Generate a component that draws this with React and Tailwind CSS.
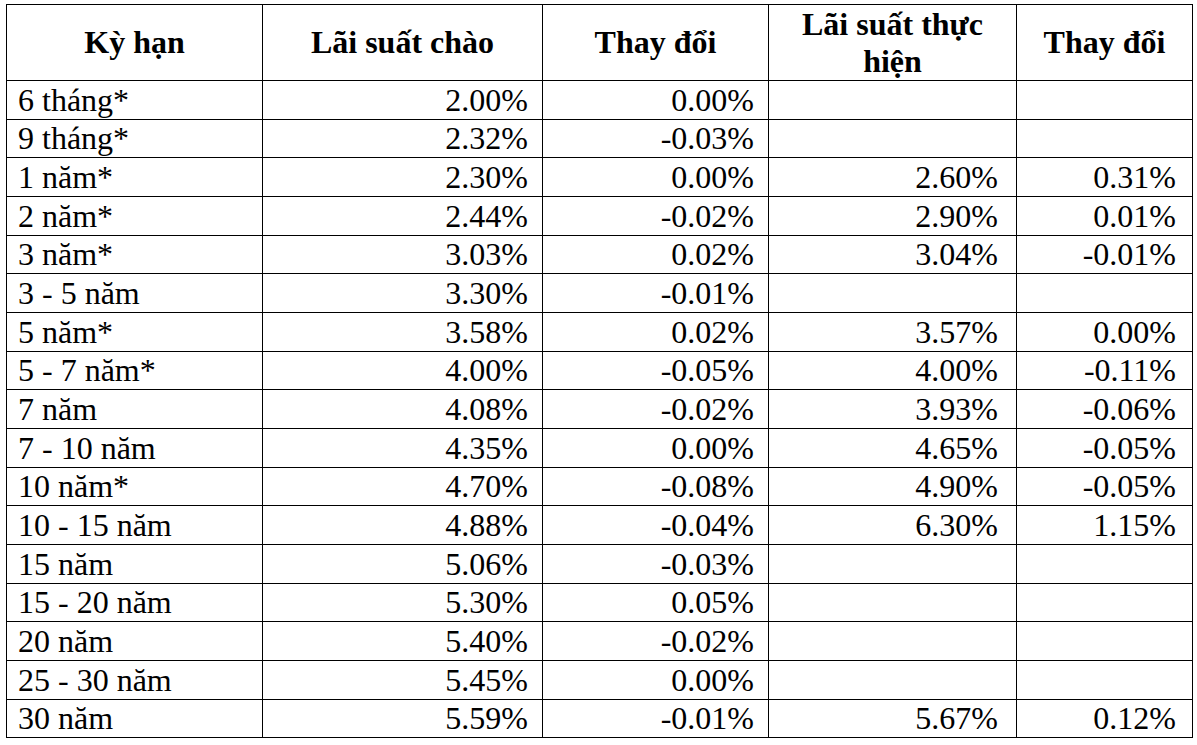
import React from "react";

const rows = [
  ["6 tháng*", "2.00%", "0.00%", "", ""],
  ["9 tháng*", "2.32%", "-0.03%", "", ""],
  ["1 năm*", "2.30%", "0.00%", "2.60%", "0.31%"],
  ["2 năm*", "2.44%", "-0.02%", "2.90%", "0.01%"],
  ["3 năm*", "3.03%", "0.02%", "3.04%", "-0.01%"],
  ["3 - 5 năm", "3.30%", "-0.01%", "", ""],
  ["5 năm*", "3.58%", "0.02%", "3.57%", "0.00%"],
  ["5 - 7 năm*", "4.00%", "-0.05%", "4.00%", "-0.11%"],
  ["7 năm", "4.08%", "-0.02%", "3.93%", "-0.06%"],
  ["7 - 10 năm", "4.35%", "0.00%", "4.65%", "-0.05%"],
  ["10 năm*", "4.70%", "-0.08%", "4.90%", "-0.05%"],
  ["10 - 15 năm", "4.88%", "-0.04%", "6.30%", "1.15%"],
  ["15 năm", "5.06%", "-0.03%", "", ""],
  ["15 - 20 năm", "5.30%", "0.05%", "", ""],
  ["20 năm", "5.40%", "-0.02%", "", ""],
  ["25 - 30 năm", "5.45%", "0.00%", "", ""],
  ["30 năm", "5.59%", "-0.01%", "5.67%", "0.12%"],
];

const headers = ["Kỳ hạn", "Lãi suất chào", "Thay đổi", "Lãi suất thực hiện", "Thay đổi"];

const cellPad = [
  "justify-start pl-[11px]",
  "justify-end pr-[14px]",
  "justify-end pr-[14px]",
  "justify-end pr-[18px]",
  "justify-end pr-[16px]",
];

export default function App() {
  return (
    <div
      className="w-[1197px] h-[745px] bg-white text-black overflow-hidden"
      style={{ fontFamily: '"Liberation Serif", "Times New Roman", serif' }}
    >
      <div className="ml-[6px] mt-[4px] inline-grid grid-cols-[256px_280px_226px_248px_176px] grid-rows-[76px_repeat(17,38.67px)] border-l border-t border-black text-[32px]">
        {headers.map((h, i) => (
          <div
            key={"h" + i}
            className="flex items-center justify-center text-center font-bold leading-[37px] px-[12px] border-r border-b border-black"
          >
            {h}
          </div>
        ))}
        {rows.map((r, ri) =>
          r.map((c, ci) => (
            <div
              key={ri + "-" + ci}
              className={`flex items-center leading-none whitespace-nowrap border-r border-b border-black ${cellPad[ci]}`}
            >
              {c}
            </div>
          ))
        )}
      </div>
    </div>
  );
}
